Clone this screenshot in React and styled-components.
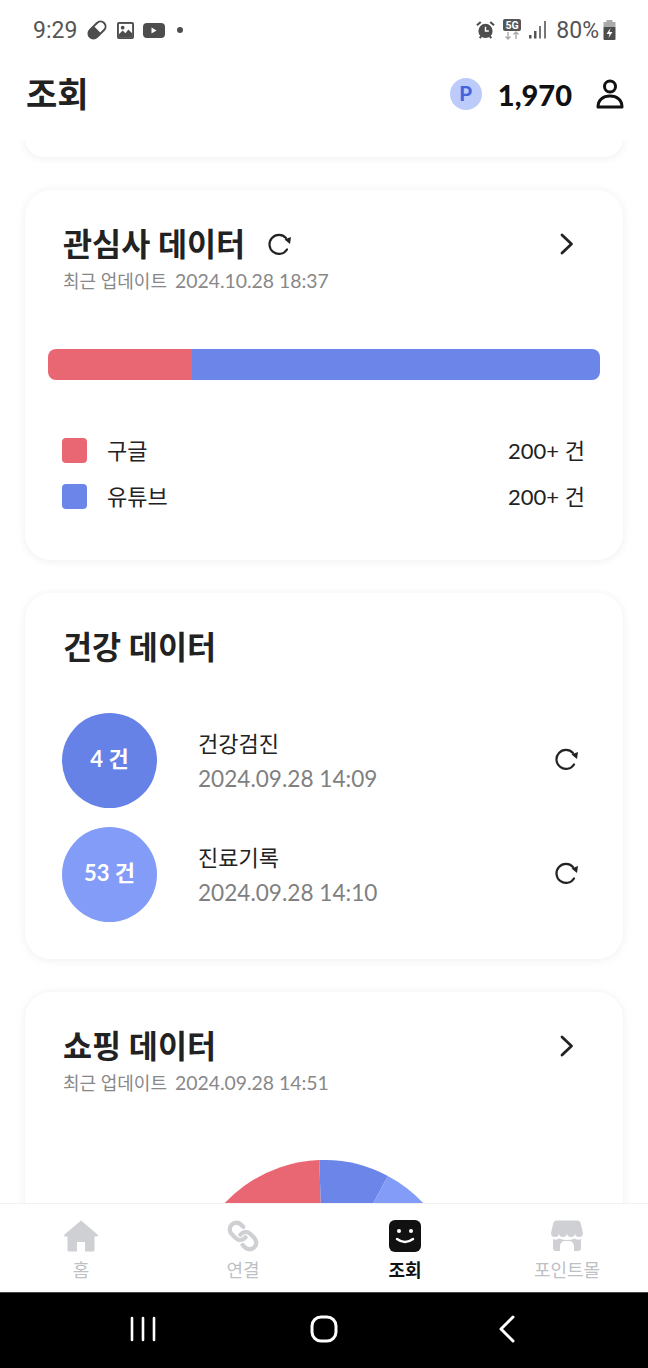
import React from "react";
import styled, { createGlobalStyle } from "styled-components";

const GlobalStyle = createGlobalStyle`
  html, body { margin: 0; padding: 0; background: #fff; }
  body { font-family: Lato, "Noto Sans CJK KR", sans-serif; }
  * { box-sizing: border-box; }
`;

const Screen = styled.div`
  width: 648px;
  height: 1368px;
  display: flex;
  flex-direction: column;
  overflow: hidden;
  background: #fff;
  color: #222;
`;

const StatusBar = styled.div`
  height: 60px;
  flex: none;
  padding: 0 32px 0 33px;
  display: flex;
  align-items: center;
  justify-content: space-between;
  color: #555;
  font-family: Roboto, sans-serif;
  font-size: 23px;
`;

const StatusGroup = styled.div`
  display: flex;
  align-items: center;
  gap: ${(p) => p.$gap}px;
`;

const StatusIcon = styled.svg`
  margin-left: ${(p) => p.$left || 0}px;
`;

const Header = styled.header`
  height: 78px;
  flex: none;
  padding: 0 24px 10px 26px;
  display: flex;
  align-items: center;
  justify-content: space-between;
`;

const PageTitle = styled.h1`
  margin: 0 0 4px;
  font-size: 34px;
  font-weight: 700;
  color: #222;
`;

const PointBox = styled.div`
  display: flex;
  align-items: center;
`;

const PointBadge = styled.div`
  width: 32px;
  height: 32px;
  border-radius: 50%;
  background: #bccbfa;
  color: #4464de;
  font-family: Roboto, sans-serif;
  font-weight: 700;
  font-size: 20px;
  display: flex;
  align-items: center;
  justify-content: center;
  margin-right: 16px;
`;

const PointValue = styled.span`
  font-size: 29px;
  font-weight: 900;
  color: #111;
  margin-right: 24px;
`;

const Content = styled.main`
  flex: 1;
  min-height: 0;
  overflow: hidden;
  background: #fff;
  padding: 0 25px;
  display: flex;
  flex-direction: column;
  gap: 33px;
`;

const Card = styled.section`
  flex: none;
  background: #fff;
  border-radius: 26px;
  box-shadow: 0 1px 10px rgba(0, 0, 0, 0.07);
  padding: 30px 38px 0;
  height: ${(p) => p.$height}px;
`;

const CardTail = styled(Card)`
  padding: 0;
  border-radius: 0 0 26px 26px;
`;

const TitleRow = styled.div`
  display: flex;
  align-items: center;
  height: 44px;
`;

const CardTitle = styled.h2`
  margin: 0;
  font-size: 31.6px;
  font-weight: 700;
  color: #222;
`;

const Chevron = styled.svg`
  margin: 3px 8px 0 auto;
`;

const TitleRefresh = styled.svg`
  margin: 3px 0 0 23px;
`;

const Updated = styled.div`
  font-size: 19.4px;
  line-height: 28px;
  color: #888;
  margin-top: 3px;
`;

const UpdatedLabel = styled.span`
  font-size: 18px;
  margin-right: 3px;
`;

const StackBar = styled.div`
  display: flex;
  height: 31px;
  margin: 54px -15px 0;
  border-radius: 8px;
  overflow: hidden;
`;

const BarPart = styled.div`
  background: ${(p) => p.$color};
`;

const Legend = styled.div`
  margin-top: 56px;
  display: flex;
  flex-direction: column;
  gap: 20px;
`;

const LegendRow = styled.div`
  display: flex;
  align-items: center;
  height: 26px;
  font-size: 22px;
  color: #222;
`;

const Swatch = styled.span`
  width: 25px;
  height: 25px;
  border-radius: 4px;
  background: ${(p) => p.$color};
  margin: 2px 20px 0 -1px;
`;

const LegendCount = styled.span`
  margin-left: auto;
  font-size: 22px;
`;

const HealthList = styled.div`
  margin-top: 46px;
  display: flex;
  flex-direction: column;
  gap: 19px;
`;

const HealthRow = styled.div`
  display: flex;
  align-items: center;
`;

const CountCircle = styled.div`
  width: 95px;
  height: 95px;
  margin-left: -1px;
  border-radius: 50%;
  flex: none;
  background: ${(p) => p.$color};
  color: #fff;
  font-size: 22px;
  font-weight: 700;
  padding-bottom: 7px;
  display: flex;
  align-items: center;
  justify-content: center;
`;

const HealthText = styled.div`
  margin-left: 41px;
  padding-top: 3px;
  flex: 1;
`;

const HealthName = styled.div`
  font-size: 22px;
  line-height: 33px;
  color: #222;
`;

const HealthDate = styled.div`
  font-size: 22.6px;
  line-height: 38px;
  color: #808080;
`;

const RowRefresh = styled.svg`
  margin: 0 6px 3px 0;
`;

const Pie = styled.svg`
  display: block;
  margin: 63px auto 0;
`;

const BottomNav = styled.nav`
  height: 89px;
  flex: none;
  background: #fff;
  display: grid;
  grid-template-columns: repeat(4, 1fr);
  border-top: 1px solid #f2f2f2;
`;

const NavItem = styled.div`
  display: flex;
  flex-direction: column;
  align-items: center;
  padding-top: 16px;
  font-size: 18px;
  line-height: 24px;
  font-weight: ${(p) => (p.$active ? 700 : 400)};
  color: ${(p) => (p.$active ? "#111" : "#bdc0c4")};
  gap: 6px;
`;

const SystemBar = styled.div`
  height: 76px;
  flex: none;
  background: #000;
  border-top: 1px solid #444;
  padding: 0 50px 4px;
  display: grid;
  grid-template-columns: 1fr 1fr 1fr;
  align-items: center;
  justify-items: center;
`;

const RecentsIcon = styled.svg`
  margin-left: 3px;
`;

const RefreshIcon = ({ as: Comp }) => (
  <Comp width="24" height="24" viewBox="0 0 24 24" fill="none">
    <path d="M19 17.500A9.500 9.500 0 1 1 18 6" stroke="#222" strokeWidth="2.200" strokeLinecap="round" />
    <path d="M16.500 7.500L23 5l-1 7z" fill="#222" />
  </Comp>
);

const ChevronIcon = () => (
  <Chevron width="20" height="24" viewBox="0 0 20 24" fill="none" stroke="#222" strokeWidth="2.800" strokeLinecap="round" strokeLinejoin="round">
    <path d="M5 3l9.500 9L5 21" />
  </Chevron>
);

const sector = (cx, cy, r, a0, a1) => {
  const p = (a) => [cx + r * Math.sin((a * Math.PI) / 180), cy - r * Math.cos((a * Math.PI) / 180)];
  const [x0, y0] = p(a0);
  const [x1, y1] = p(a1);
  return `M${cx} ${cy}L${x0} ${y0}A${r} ${r} 0 0 1 ${x1} ${y1}Z`;
};

const legendRows = [
  { name: "구글", color: "#e96673", share: 26 },
  { name: "유튜브", color: "#6c85e9", share: 74 },
];

const healthRows = [
  { count: "4 건", name: "건강검진", date: "2024.09.28 14:09", color: "#6682e6" },
  { count: "53 건", name: "진료기록", date: "2024.09.28 14:10", color: "#829cf8" },
];

const NAV_GRAY = "#ced0d3";

const navItems = [
  {
    label: "홈",
    icon: (
      <svg width="34" height="32" viewBox="0 0 34 32" fill={NAV_GRAY}>
        <path fillRule="evenodd" d="M17 .5L33.500 14.500c.8.8.3 2-.8 2H30.500V30a1.500 1.500 0 0 1-1.500 1.500H21V22h-8v9.500H5A1.500 1.500 0 0 1 3.500 30V16.500H1.300c-1.100 0-1.600-1.200-.8-2z" />
      </svg>
    ),
  },
  {
    label: "연결",
    icon: (
      <svg width="32" height="32" viewBox="0 0 24 24" fill="none" stroke={NAV_GRAY} strokeWidth="3.200" strokeLinecap="round" strokeLinejoin="round">
        <g transform="translate(24 0) scale(-1 1)">
          <path d="M10 13a5 5 0 0 0 7.540.54l3-3a5 5 0 0 0-7.070-7.070l-1.720 1.710" />
          <path d="M14 11a5 5 0 0 0-7.540-.54l-3 3a5 5 0 0 0 7.070 7.070l1.710-1.710" />
        </g>
      </svg>
    ),
  },
  {
    label: "조회",
    active: true,
    icon: (
      <svg width="32" height="32" viewBox="0 0 32 32">
        <rect width="32" height="32" rx="6" fill="#111" />
        <circle cx="10" cy="11" r="2" fill="#fff" />
        <circle cx="22" cy="11" r="2" fill="#fff" />
        <path d="M8 19Q16 25 24 19" fill="none" stroke="#fff" strokeWidth="2.400" strokeLinecap="round" />
      </svg>
    ),
  },
  {
    label: "포인트몰",
    icon: (
      <svg width="32" height="32" viewBox="0 0 32 32" fill={NAV_GRAY}>
        <path d="M6 .5h20a4 4 0 0 1 3.800 3L32 13a4 4 0 0 1-8 0a4 4 0 0 1-8 0a4 4 0 0 1-8 0a4 4 0 0 1-8 0L2.200 3.500A4 4 0 0 1 6 .5z" />
        <path d="M2 19q3.500 1.500 6.500-.5q7.500 3 15 0q3 2 6.500.5V28a3 3 0 0 1-3 3H23V26a5 5 0 0 0-5-5h-4a5 5 0 0 0-5 5v5H5a3 3 0 0 1-3-3z" />
      </svg>
    ),
  },
];

const App = () => {
  return (
    <>
      <GlobalStyle />
      <Screen>
        <StatusBar>
          <StatusGroup $gap={9}>
            <span>9:29</span>
            <StatusIcon width="22" height="22" viewBox="0 0 22 22">
              <g transform="rotate(-45 11 11)">
                <rect x="0" y="5" width="22" height="12" rx="6" fill="#4d4d4d" />
                <path d="M11.500 7h4.500a4 4 0 0 1 0 8h-4.500z" fill="#fff" />
              </g>
            </StatusIcon>
            <StatusIcon width="17" height="17" viewBox="0 0 18 18">
              <rect width="18" height="18" rx="2" fill="#4d4d4d" />
              <rect x="2" y="2" width="14" height="14" fill="#fff" />
              <path d="M2 13l4-4 3 3 3-4 4 4v4H2z" fill="#4d4d4d" />
              <circle cx="6" cy="6" r="2" fill="#4d4d4d" />
            </StatusIcon>
            <StatusIcon width="22" height="15" viewBox="0 0 22 15">
              <rect width="22" height="15" rx="4" fill="#4d4d4d" />
              <path d="M8.500 4.500v6l5-3z" fill="#fff" />
            </StatusIcon>
            <StatusIcon width="12" height="8" viewBox="0 0 12 8">
              <circle cx="6" cy="4" r="3" fill="#4d4d4d" />
            </StatusIcon>
          </StatusGroup>
          <StatusGroup $gap={4}>
            <StatusIcon width="19" height="20" viewBox="0 0 20 20">
              <circle cx="10" cy="11" r="7.500" fill="#4d4d4d" />
              <path d="M10 6.500V11h3.500" fill="none" stroke="#fff" strokeWidth="1.500" />
              <path d="M1 5l4-3.500M19 5l-4-3.500M4 18.500l1.500-2M16 18.500l-1.500-2" stroke="#4d4d4d" strokeWidth="2.200" />
            </StatusIcon>
            <StatusIcon $left={3} width="20" height="22" viewBox="0 0 20 22">
              <rect x="1" width="18" height="12" rx="2" fill="#555" />
              <text x="10" y="10" textAnchor="middle" fontSize="10.500" fontWeight="700" fontFamily="Roboto" fill="#fff">5G</text>
              <path d="M6 13v7M3.500 17.500L6 20l2.500-2.500" stroke="#aaa" strokeWidth="1.400" fill="none" />
              <path d="M14 20v-7M11.500 15.500L14 13l2.500 2.500" stroke="#aaa" strokeWidth="1.400" fill="none" />
            </StatusIcon>
            <StatusIcon $left={3} width="17" height="18" viewBox="0 0 17 18">
              <rect x="0" y="14" width="2.500" height="3.500" fill="#555" />
              <rect x="5" y="10" width="2.500" height="7.500" fill="#555" />
              <rect x="10" y="5" width="2" height="12.500" fill="#777" />
              <rect x="15" y="0" width="2" height="17.500" fill="#777" />
            </StatusIcon>
            <StatusIcon as="span" $left={6}>80%</StatusIcon>
            <StatusIcon width="13" height="20" viewBox="0 0 12 20">
              <rect x="3" width="6" height="3" fill="#aaa" />
              <rect x="0" y="2" width="12" height="6" fill="#aaa" />
              <rect x="0" y="7" width="12" height="13" rx="1" fill="#4d4d4d" />
              <path d="M7 8l-4 6h3l-1 4 4-6H6z" fill="#fff" />
            </StatusIcon>
          </StatusGroup>
        </StatusBar>

        <Header>
          <PageTitle>조회</PageTitle>
          <PointBox>
            <PointBadge>P</PointBadge>
            <PointValue>1,970</PointValue>
            <svg width="28" height="30" viewBox="0 0 28 30" fill="none" stroke="#111" strokeWidth="3">
              <circle cx="14" cy="7.500" r="5.500" />
              <path d="M2 28c0-7 5-11 12-11s12 4 12 11z" strokeLinejoin="round" />
            </svg>
          </PointBox>
        </Header>

        <Content>
          <CardTail $height={19} />

          <Card $height={370}>
            <TitleRow>
              <CardTitle>관심사 데이터</CardTitle>
              <RefreshIcon as={TitleRefresh} />
              <ChevronIcon />
            </TitleRow>
            <Updated>
              <UpdatedLabel>최근 업데이트</UpdatedLabel> 2024.10.28 18:37
            </Updated>
            <StackBar>
              {legendRows.map((row) => (
                <BarPart key={row.name} $color={row.color} style={{ width: `${row.share}%` }} />
              ))}
            </StackBar>
            <Legend>
              {legendRows.map((row) => (
                <LegendRow key={row.name}>
                  <Swatch $color={row.color} />
                  {row.name}
                  <LegendCount>200+ 건</LegendCount>
                </LegendRow>
              ))}
            </Legend>
          </Card>

          <Card $height={366}>
            <TitleRow>
              <CardTitle>건강 데이터</CardTitle>
            </TitleRow>
            <HealthList>
              {healthRows.map((row) => (
                <HealthRow key={row.name}>
                  <CountCircle $color={row.color}>{row.count}</CountCircle>
                  <HealthText>
                    <HealthName>{row.name}</HealthName>
                    <HealthDate>{row.date}</HealthDate>
                  </HealthText>
                  <RefreshIcon as={RowRefresh} />
                </HealthRow>
              ))}
            </HealthList>
          </Card>

          <Card $height={300}>
            <TitleRow>
              <CardTitle>쇼핑 데이터</CardTitle>
              <ChevronIcon />
            </TitleRow>
            <Updated>
              <UpdatedLabel>최근 업데이트</UpdatedLabel> 2024.09.28 14:51
            </Updated>
            <Pie width="272" height="272" viewBox="0 0 272 272">
              <path d={sector(136, 136, 136, -70, -2)} fill="#e96673" />
              <path d={sector(136, 136, 136, -2, 28)} fill="#6c85e9" />
              <path d={sector(136, 136, 136, 28, 70)} fill="#829cf8" />
            </Pie>
          </Card>
        </Content>

        <BottomNav>
          {navItems.map((item) => (
            <NavItem key={item.label} $active={item.active}>
              {item.icon}
              {item.label}
            </NavItem>
          ))}
        </BottomNav>

        <SystemBar>
          <RecentsIcon width="26" height="26" viewBox="0 0 26 26" stroke="#fff" strokeWidth="2.600" strokeLinecap="round">
            <path d="M2 2v22M13 2v22M24 2v22" />
          </RecentsIcon>
          <svg width="28" height="28" viewBox="0 0 28 28" fill="none" stroke="#fff" strokeWidth="3">
            <rect x="2" y="2" width="24" height="24" rx="9" />
          </svg>
          <svg width="18" height="28" viewBox="0 0 18 28" fill="none" stroke="#fff" strokeWidth="3" strokeLinecap="round" strokeLinejoin="round">
            <path d="M15 2L3 14l12 12" />
          </svg>
        </SystemBar>
      </Screen>
    </>
  );
};

export default App;
